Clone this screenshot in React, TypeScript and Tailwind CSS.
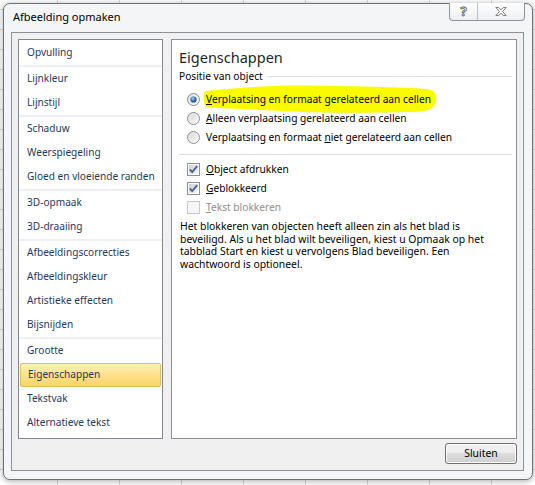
import React from "react";

function Radio({ checked }: { checked?: boolean }) {
  return (
    <svg width="13" height="13" viewBox="0 0 13 13" className="shrink-0">
      <defs>
        <linearGradient id="rgBg" x1="0" y1="0" x2="1" y2="1">
          <stop offset="0" stopColor="#cfd1d4" />
          <stop offset="1" stopColor="#ffffff" />
        </linearGradient>
        <radialGradient id="rgDot" cx="0.4" cy="0.35" r="0.75">
          <stop offset="0" stopColor="#a9dcfa" />
          <stop offset="0.5" stopColor="#2f77b6" />
          <stop offset="1" stopColor="#123866" />
        </radialGradient>
      </defs>
      <circle cx="6.5" cy="6.5" r="6" fill="url(#rgBg)" stroke="#8e8f8f" strokeWidth="1" />
      <circle cx="6.5" cy="6.5" r="4.4" fill="none" stroke="#f4f4f4" strokeWidth="0.8" />
      {checked && <circle cx="6.5" cy="6.5" r="3.1" fill="url(#rgDot)" />}
    </svg>
  );
}

function Check({ checked, disabled }: { checked?: boolean; disabled?: boolean }) {
  return (
    <svg width="13" height="13" viewBox="0 0 13 13" className="shrink-0">
      <defs>
        <linearGradient id="cbBg" x1="0" y1="0" x2="1" y2="1">
          <stop offset="0" stopColor="#cbcfd5" />
          <stop offset="1" stopColor="#f7f7f7" />
        </linearGradient>
      </defs>
      <rect
        x="0.5"
        y="0.5"
        width="12"
        height="12"
        fill={disabled ? "#f6f6f6" : "#ffffff"}
        stroke={disabled ? "#c9c9c9" : "#8e8f8f"}
      />
      {!disabled && <rect x="2" y="2" width="9" height="9" fill="url(#cbBg)" />}
      {checked && (
        <path d="M2.8 6.4 L5.2 9.2 L10.2 3.2" stroke="#4b5f93" strokeWidth="1.8" fill="none" />
      )}
    </svg>
  );
}

const groups: string[][] = [
  ["Opvulling"],
  ["Lijnkleur", "Lijnstijl"],
  ["Schaduw", "Weerspiegeling", "Gloed en vloeiende randen"],
  ["3D-opmaak", "3D-draaiing"],
  ["Afbeeldingscorrecties", "Afbeeldingskleur", "Artistieke effecten", "Bijsnijden"],
  ["Grootte", "Eigenschappen", "Tekstvak", "Alternatieve tekst"],
];

export default function App() {
  return (
    <div className="relative w-[535px] h-[485px] overflow-hidden bg-white bg-[linear-gradient(90deg,#d9d9d9_1px,transparent_1px),linear-gradient(#d9d9d9_1px,transparent_1px)] bg-size-[62px_20px] bg-position-[57px_9px] font-['Noto_Sans',sans-serif]">
      {/* window */}
      <div className="absolute left-[3px] top-[3px] w-[530px] h-[477px] rounded-[7px] border border-[#6e7278] bg-[#f4f5f7] shadow-[0_1px_6px_rgba(0,0,0,0.35)] flex flex-col pt-[28px] pl-[7px] pr-[8px] pb-[8px]">
        <div className="absolute left-[9px] top-[5px] text-[11px] leading-[16px] text-black">
          Afbeelding opmaken
        </div>
        {/* caption buttons */}
        <div className="absolute right-[7px] top-[-1px] h-[18px] flex rounded-b-[4px] border border-t-0 border-[#8f949b] bg-[linear-gradient(#ffffff,#eceef1)] overflow-hidden">
          <div className="w-[28px] h-full flex items-center justify-center border-r border-[#b9bcc1] text-[13px] leading-none font-bold text-white [-webkit-text-stroke:0.8px_#5e5e5e]">
            ?
          </div>
          <div className="w-[46px] h-full flex items-center justify-center">
            <svg width="12" height="9" viewBox="0 0 13 10">
              <polygon
                points="0.8,0.5 3.8,0.5 6.5,3.2 9.2,0.5 12.2,0.5 8.3,5 12.2,9.5 9.2,9.5 6.5,6.8 3.8,9.5 0.8,9.5 4.7,5"
                fill="#ffffff"
                stroke="#5e5e5e"
                strokeWidth="0.9"
                strokeLinejoin="round"
              />
            </svg>
          </div>
        </div>

        {/* client area */}
        <div className="flex-1 border border-[#8d9096] bg-[#f0f0f0] flex flex-col pt-[6px] px-[6px]">
          <div className="flex gap-[8px] h-[400px]">
            {/* left list */}
            <div className="w-[145px] border border-[#828790] bg-white pt-[1px] flex flex-col">
              {groups.map((g, gi) => (
                <React.Fragment key={gi}>
                  {gi > 0 && <div className="h-[2px] bg-[#eef0f3]" />}
                  {g.map((it) =>
                    it === "Eigenschappen" ? (
                      <div
                        key={it}
                        className="h-[24px] mx-[1px] flex items-center pl-[7px] rounded-[2px] border border-[#e3bd5c] bg-[linear-gradient(#fff1b9,#fde38f_45%,#fbd36b)] text-[10.1px] text-[#1e395b] whitespace-nowrap"
                      >
                        {it}
                      </div>
                    ) : (
                      <div
                        key={it}
                        className="h-[24px] flex items-center pl-[8px] text-[10.1px] text-[#1e395b] whitespace-nowrap"
                      >
                        {it}
                      </div>
                    )
                  )}
                </React.Fragment>
              ))}
            </div>

            {/* right panel */}
            <div className="flex-1 border border-[#8b8f95] bg-white pl-[7px] pr-[4px] pt-[8px] flex flex-col text-[10.2px] text-black">
              <div className="text-[14.5px] leading-[19px] text-[#1f1f1f]">Eigenschappen</div>
              <div className="mt-[3px] h-[13px] flex items-center">
                <span className="leading-[13px] whitespace-nowrap">Positie van object</span>
                <div className="flex-1 h-px bg-[#d9dee3] ml-[5px]" />
              </div>

              <div className="mt-[7px] pl-[8px] flex flex-col">
                <div className="relative h-[19px] flex items-center gap-[6px]">
                  <Radio checked />
                  <svg
                    className="absolute left-[16px] top-[-5px] w-[234px] h-[28px] blur-[0.6px]"
                    viewBox="0 0 236 28"
                    preserveAspectRatio="none"
                  >
                    <path
                      d="M2 6 C30 3,70 0,100 0.5 C150 1,200 2,226 4 C234 5,236 10,235 16 C234 24,226 27,210 27 C170 28,120 28.5,80 26 C50 24.5,20 23.5,4 22 C0 20,0 9,2 6 Z"
                      fill="#fbfb00"
                    />
                  </svg>
                  <span className="relative whitespace-nowrap">
                    <span className="underline underline-offset-[1px]">V</span>erplaatsing en formaat gerelateerd aan cellen
                  </span>
                </div>
                <div className="h-[19px] flex items-center gap-[6px]">
                  <Radio />
                  <span className="whitespace-nowrap">
                    <span className="underline underline-offset-[1px]">A</span>lleen verplaatsing gerelateerd aan cellen
                  </span>
                </div>
                <div className="h-[19px] flex items-center gap-[6px]">
                  <Radio />
                  <span className="whitespace-nowrap">
                    Verplaatsing en formaat <span className="underline underline-offset-[1px]">n</span>iet gerelateerd aan cellen
                  </span>
                </div>
              </div>

              <div className="mt-[7px] h-px bg-[#d9dee3]" />

              <div className="mt-[5px] pl-[8px] flex flex-col">
                <div className="h-[19px] flex items-center gap-[6px]">
                  <Check checked />
                  <span className="whitespace-nowrap">
                    <span className="underline underline-offset-[1px]">O</span>bject afdrukken
                  </span>
                </div>
                <div className="h-[19px] flex items-center gap-[6px]">
                  <Check checked />
                  <span className="whitespace-nowrap">
                    <span className="underline underline-offset-[1px]">G</span>eblokkeerd
                  </span>
                </div>
                <div className="h-[19px] flex items-center gap-[6px]">
                  <Check disabled />
                  <span className="whitespace-nowrap text-[#8d8d8d]">
                    <span className="underline underline-offset-[1px]">T</span>ekst blokkeren
                  </span>
                </div>
              </div>

              <p className="mt-[3px] pl-[1px] text-[10.4px] leading-[12.6px] whitespace-nowrap">
                Het blokkeren van objecten heeft alleen zin als het blad is
                <br />
                beveiligd. Als u het blad wilt beveiligen, kiest u Opmaak op het
                <br />
                tabblad Start en kiest u vervolgens Blad beveiligen. Een
                <br />
                wachtwoord is optioneel.
              </p>
            </div>
          </div>

          <div className="self-end mt-[4px] w-[72px] h-[21px] rounded-[3px] border border-[#707070] bg-[linear-gradient(#f2f2f2,#ebebeb_50%,#dddddd_50%,#cfcfcf)] shadow-[inset_0_0_0_1px_#fcfcfc] flex items-center justify-center text-[10.4px] text-black">
            Sluiten
          </div>
        </div>
      </div>
    </div>
  );
}
